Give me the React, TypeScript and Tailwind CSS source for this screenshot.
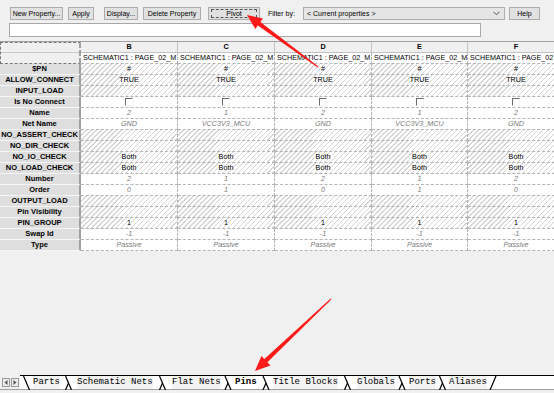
import type { JSX } from "react";

type Cell = { t?: string; kind?: "i" | "n" | "cb" };

const rows: { label: string; hatch: boolean; cells: Cell[] }[] = [];

const cols = [
    { name: "2", net: "GND", num: "2", order: "0" },
    { name: "1", net: "VCC3V3_MCU", num: "1", order: "1" },
    { name: "2", net: "GND", num: "2", order: "0" },
    { name: "1", net: "VCC3V3_MCU", num: "1", order: "1" },
    { name: "2", net: "GND", num: "2", order: "0" },
];

function mk(label: string, hatch: boolean, f: (c: (typeof cols)[number]) => Cell) {
    rows.push({ label, hatch, cells: cols.map(f) });
}

mk("$PN", true, () => ({ t: "#", kind: "n" }));
mk("ALLOW_CONNECT", true, () => ({ t: "TRUE", kind: "n" }));
mk("INPUT_LOAD", true, () => ({}));
mk("Is No Connect", false, () => ({ kind: "cb" }));
mk("Name", false, (c) => ({ t: c.name, kind: "i" }));
mk("Net Name", false, (c) => ({ t: c.net, kind: "i" }));
mk("NO_ASSERT_CHECK", true, () => ({}));
mk("NO_DIR_CHECK", true, () => ({}));
mk("NO_IO_CHECK", true, () => ({ t: "Both", kind: "n" }));
mk("NO_LOAD_CHECK", true, () => ({ t: "Both", kind: "n" }));
mk("Number", false, (c) => ({ t: c.num, kind: "i" }));
mk("Order", false, (c) => ({ t: c.order, kind: "i" }));
mk("OUTPUT_LOAD", true, () => ({}));
mk("Pin Visibility", true, () => ({}));
mk("PIN_GROUP", true, () => ({ t: "1", kind: "n" }));
mk("Swap Id", false, () => ({ t: "-1", kind: "i" }));
mk("Type", false, () => ({ t: "Passive", kind: "i" }));

const hatchBg =
    "bg-[repeating-linear-gradient(135deg,#d6d6d6_0px,#d6d6d6_1px,#ffffff_1px,#ffffff_3.5px)]";

function Btn({ label, w, ml, dashed }: { label: string; w: number; ml: number; dashed?: boolean }) {
    return (
        <div
            style={{ width: w, marginLeft: ml }}
            className="h-[13px] shrink-0 flex items-center justify-center bg-[#e1e1e1] border border-[#adadad] text-[7px] text-black whitespace-nowrap"
        >
            <span
                className={
                    dashed
                        ? "w-[calc(100%-4px)] h-[9px] border border-dashed border-[#555] flex items-center justify-center leading-none"
                        : "leading-none"
                }
            >
                {label}
            </span>
        </div>
    );
}

function Checkbox() {
    return (
        <span className="inline-block w-[8px] h-[8px] bg-white border-t border-l border-[#6d6d6d] border-r border-b border-r-[#f4f4f4] border-b-[#f4f4f4]" />
    );
}

function Lambda({ w, first, last }: { w: number; first?: boolean; last?: boolean }) {
    const c = w / 2;
    return (
        <svg width={w} height={14} className="shrink-0">
            {last ? (
                <line x1={c - 3} y1={14} x2={c + 3} y2={0} stroke="#000" strokeWidth={1.2} />
            ) : (
                <line x1={c - 3} y1={0} x2={c + 3} y2={14} stroke="#000" strokeWidth={1.2} />
            )}
            {!first && !last && (
                <line x1={c} y1={7} x2={c - 3} y2={14} stroke="#000" strokeWidth={1.2} />
            )}
        </svg>
    );
}

function arrow(tip: [number, number], tail: [number, number]) {
    const dx = tail[0] - tip[0];
    const dy = tail[1] - tip[1];
    const len = Math.hypot(dx, dy);
    const ux = dx / len;
    const uy = dy / len;
    const nx = -uy;
    const ny = ux;
    const L = 15;
    const bx = tip[0] + ux * L;
    const by = tip[1] + uy * L;
    const p = (x: number, y: number) => `${x.toFixed(1)},${y.toFixed(1)}`;
    return [
        p(tip[0], tip[1]),
        p(bx + nx * 6.5, by + ny * 6.5),
        p(bx + nx * 2.2, by + ny * 2.2),
        p(tail[0] + nx * 0.5, tail[1] + ny * 0.5),
        p(tail[0] - nx * 0.5, tail[1] - ny * 0.5),
        p(bx - nx * 2.2, by - ny * 2.2),
        p(bx - nx * 6.5, by - ny * 6.5),
    ].join(" ");
}

const tabs = [
    { label: "Parts", w: 27, gap: 13 },
    { label: "Schematic Nets", w: 76, gap: 17 },
    { label: "Flat Nets", w: 49, gap: 19 },
    { label: "Pins", w: 24, gap: 14, active: true },
    { label: "Title Blocks", w: 65, gap: 14 },
    { label: "Globals", w: 38, gap: 19 },
    { label: "Ports", w: 27, gap: 14 },
    { label: "Aliases", w: 38, gap: 13 },
];

export default function App(): JSX.Element {
    return (
        <div className="relative w-[554px] h-[393px] overflow-hidden bg-[#f0f0f0] font-['Liberation_Sans',Arial,sans-serif] flex flex-col">
            {/* toolbar */}
            <div className="flex items-center h-[14px] mt-[6px]">
                <Btn label="New Property..." w={53} ml={10} />
                <Btn label="Apply" w={26} ml={5} />
                <Btn label="Display..." w={34} ml={10} />
                <Btn label="Delete Property" w={58} ml={5} />
                <Btn label="Pivot" w={52} ml={7} dashed />
                <span className="ml-[8px] w-[35px] shrink-0 text-[7px] leading-none whitespace-nowrap">Filter by:</span>
                <div className="w-[202px] shrink-0 h-[13px] bg-[#e5e5e5] border border-[#adadad] flex items-center pl-[3px] pr-[4px] text-[7px]">
                    <span className="flex-1 leading-none">&lt; Current properties &gt;</span>
                    <svg width="7" height="5" viewBox="0 0 7 5">
                        <path d="M0.5 0.8 L3.5 3.8 L6.5 0.8" fill="none" stroke="#444" strokeWidth="0.9" />
                    </svg>
                </div>
                <Btn label="Help" w={31} ml={4} />
            </div>
            <div className="ml-[9px] mt-[3px] w-[472px] h-[14px] bg-white border border-[#a8a8a8]" />

            {/* grid */}
            <div className="mt-[4px] border-t border-[#a0a0a0] text-[7.2px] leading-none">
                <div className="grid grid-cols-[81px_97px_97px_97px_96px_97px] w-[565px]">
                    <div className="row-span-2 h-[22px] bg-[#f0f0f0] border border-dashed border-[#777] border-r-2 border-r-[#a0a0a0] flex flex-col">
                        <div className="h-[10px] border-b border-[#c8c8c8]" />
                    </div>
                    {["B", "C", "D", "E", "F"].map((l) => (
                        <div
                            key={l}
                            className="h-[11px] bg-[#f0f0f0] border-b border-r border-[#c3c3c3] flex items-center justify-center font-bold"
                        >
                            {l}
                        </div>
                    ))}
                    {cols.map((_, i) => (
                        <div
                            key={i}
                            className="h-[11px] bg-white border-b border-r border-dashed border-[#b5b5b5] flex items-center pl-[2px] whitespace-nowrap overflow-hidden"
                        >
                            {i === 4 ? "SCHEMATIC1 : PAGE_02" : "SCHEMATIC1 : PAGE_02_M"}
                        </div>
                    ))}
                    {rows.map((r) => (
                        <>
                            <div
                                key={r.label}
                                className="h-[11px] bg-[#dedede] border-b border-[#f5f5f5] border-r-2 border-r-[#a0a0a0] flex items-center justify-center font-bold text-[7.5px] text-black whitespace-nowrap"
                            >
                                {r.label}
                            </div>
                            {r.cells.map((c, i) => (
                                <div
                                    key={r.label + i}
                                    className={`h-[11px] border-b border-r border-dashed border-[#b5b5b5] flex items-center justify-center whitespace-nowrap overflow-hidden ${
                                        r.hatch ? hatchBg : "bg-white"
                                    } ${c.kind === "i" ? "italic text-[#7a7a7a]" : "text-black"}`}
                                >
                                    {c.kind === "cb" ? <Checkbox /> : c.t}
                                </div>
                            ))}
                        </>
                    ))}
                </div>
            </div>

            {/* tab strip */}
            <div className="mt-auto mb-[3px] h-[15px] flex items-stretch border-b border-[#a0a0a0] font-['Liberation_Mono','DejaVu_Sans_Mono',monospace] text-[9px]">
                <div className="flex items-center pl-[2px] gap-[1px] w-[20px] bg-[#f0f0f0]">
                    <div className="w-[8px] h-[9px] border border-[#9a9a9a] bg-[#ececec] flex items-center justify-center">
                        <svg width="4" height="5" viewBox="0 0 4 5">
                            <path d="M3.5 0 L0.5 2.5 L3.5 5 Z" fill="#555" />
                        </svg>
                    </div>
                    <div className="w-[8px] h-[9px] border border-[#9a9a9a] bg-[#ececec] flex items-center justify-center">
                        <svg width="4" height="5" viewBox="0 0 4 5">
                            <path d="M0.5 0 L3.5 2.5 L0.5 5 Z" fill="#555" />
                        </svg>
                    </div>
                </div>
                <div className="flex-1 flex items-stretch bg-white border-t border-black">
                    {tabs.map((t, i) => (
                        <div key={t.label} className="flex items-stretch">
                            <Lambda w={t.gap} first={i === 0} />
                            <div
                                style={{ width: t.w }}
                                className={`flex items-center whitespace-nowrap text-black ${
                                    t.active ? "bg-white font-bold" : "bg-[#f3f3f3]"
                                }`}
                            >
                                {t.label}
                            </div>
                        </div>
                    ))}
                    <Lambda w={12} last />
                </div>
            </div>

            {/* red annotation arrows */}
            <svg className="absolute inset-0 pointer-events-none" width={554} height={393}>
                <polygon points={arrow([247, 15], [318, 67])} fill="#ff1a1a" />
                <polygon points={arrow([255, 371], [331, 299])} fill="#ff1a1a" />
            </svg>
        </div>
    );
}
